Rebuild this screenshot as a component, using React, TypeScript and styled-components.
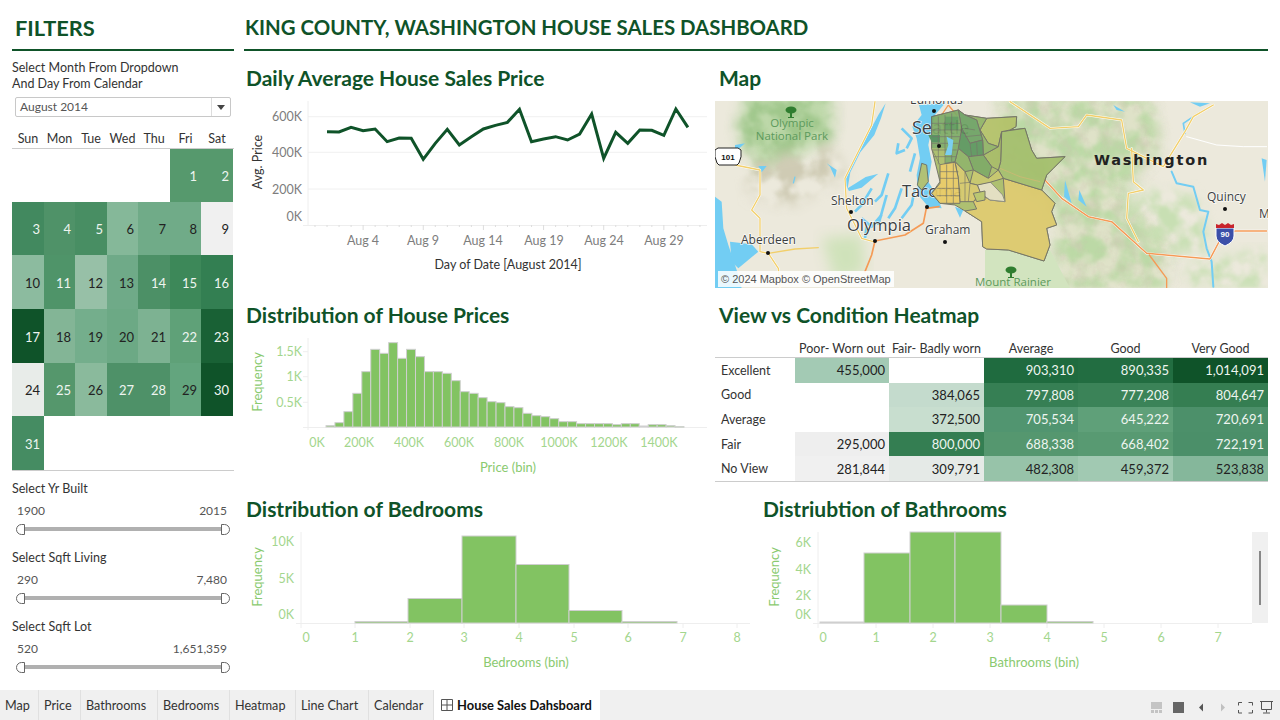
import React from 'react';
import styled, { createGlobalStyle } from 'styled-components';

const GREEN = '#0f5329';
const FONT = 'Lato, "Noto Sans", sans-serif';

const Global = createGlobalStyle`
  html, body { margin: 0; padding: 0; background: #fff; }
  body { font-family: ${FONT}; color: #333; }
`;

const Page = styled.div`
  width: 1280px; height: 720px; display: flex; flex-direction: column; overflow: hidden; background: #fff;
`;
const Body = styled.div`display: flex; height: 690px;`;
const Sidebar = styled.aside`
  width: 222px; margin-left: 12px; margin-right: 10px; flex: none; display: flex; flex-direction: column;
`;
const Main = styled.main`width: 1024px; flex: none; display: flex; flex-direction: column;`;
const Banner = styled.h1<{ $indent: number; $size: number }>`
  margin: 0; height: 49px; padding: 0 0 0 ${p => p.$indent}px; box-sizing: content-box;
  border-bottom: 2px solid ${GREEN}; color: ${GREEN}; font-size: ${p => p.$size}px; font-weight: 700;
  line-height: 55px; white-space: nowrap;
`;
const Hint = styled.div`margin-top: 9px; font-size: 12.5px; line-height: 16px; color: #333;`;
const Dropdown = styled.div`
  margin: 5px 3px 0; height: 20px; box-sizing: border-box; border: 1px solid #c8c8c8; border-radius: 2px;
  display: flex; align-items: center; font-size: 12px; color: #555; padding-left: 4px;
`;
const DropLabel = styled.span`flex: 1; margin-top: -1px;`;
const DropArrow = styled.span`
  width: 18px; height: 100%; border-left: 1px solid #ddd; display: flex; align-items: center; justify-content: center;
  &::after { content: ''; border-left: 4px solid transparent; border-right: 4px solid transparent; border-top: 5px solid #444; }
`;
const CALCOLS = '32px 31px 32px 31px 32px 31px 32px 1px';
const WeekHeader = styled.div`
  margin-top: 13px; height: 18px; display: grid; grid-template-columns: ${CALCOLS};
  border-bottom: 1px solid #ccc; font-size: 12.5px; line-height: 18px; text-align: center; color: #333;
`;
const CalGrid = styled.div`
  display: grid; grid-template-columns: ${CALCOLS}; grid-template-rows: 53px 53px 54px 54px 53px 54px;
  border-bottom: 1px solid #ccc;
`;
const DayCell = styled.div<{ $bg: string; $dark: boolean; $start?: number }>`
  background: ${p => p.$bg}; color: ${p => (p.$dark ? '#222' : '#eef5f0')};
  grid-column-start: ${p => p.$start ?? 'auto'};
  display: flex; align-items: center; justify-content: flex-end; padding-right: 4px;
  font-size: 13px; padding-top: 1px; box-sizing: border-box;
`;
const Filter = styled.div<{ $top: number }>`margin-top: ${p => p.$top}px;`;
const FilterTitle = styled.div`font-size: 12.5px; line-height: 16px; color: #333;`;
const RangeValues = styled.div`
  margin-top: 6px; padding: 0 7px 0 5px; display: flex; justify-content: space-between;
  font-size: 12px; line-height: 16px; color: #555;
`;
const Track = styled.div`margin: 4px 4px 0 4px; display: flex; align-items: center; height: 12px;`;
const Rail = styled.div`flex: 1; height: 4px; background: #b0b0b0;`;
const Handle = styled.div<{ $side: 'left' | 'right' }>`
  width: 9px; height: 11px; box-sizing: border-box; border: 1px solid #666; background: #fff;
  border-radius: ${p => (p.$side === 'left' ? '6px 0 0 6px' : '0 6px 6px 0')};
`;
const Row = styled.section<{ $cols: string; $h: number; $top: number }>`
  display: grid; grid-template-columns: ${p => p.$cols}; height: ${p => p.$h}px; margin-top: ${p => p.$top}px;
`;
const Panel = styled.div`position: relative; display: flex; flex-direction: column; min-width: 0;`;
const Title = styled.h2<{ $indent: number; $gap: number }>`
  margin: 0 0 ${p => p.$gap}px; padding-left: ${p => p.$indent}px; height: 30px; line-height: 30px;
  color: ${GREEN}; font-size: 21px; font-weight: 700; white-space: nowrap;
`;
const Svg = styled.svg`display: block; overflow: hidden;`;
const Tick = styled.text<{ $light?: boolean }>`
  font-family: ${FONT}; font-size: 12.5px; fill: ${p => (p.$light ? '#a3d68d' : '#7d7d7d')};
`;
const AxisName = styled.text<{ $light?: boolean; $size?: number }>`
  font-family: ${FONT}; font-size: ${p => p.$size ?? 12.5}px; fill: ${p => (p.$light ? '#8aca70' : '#333')};
`;
const HEATCOLS = '80px 94px 95px 94px 95px 95px';
const HeatHeadRow = styled.div`
  display: grid; grid-template-columns: ${HEATCOLS}; width: 553px; height: 19px; border-bottom: 1px solid #ccc;
`;
const HeatHead = styled.div`
  height: 20px; display: flex; align-items: center; justify-content: center; color: #333; white-space: nowrap; font-size: 12.5px;
`;
const HeatGrid = styled.div`
  display: grid; grid-template-columns: ${HEATCOLS}; grid-auto-rows: 24.6px;
  width: 553px; font-size: 12.5px; border-bottom: 1px solid #ccc;
`;
const HeatLabel = styled.div`display: flex; align-items: center; padding-left: 6px; color: #333;`;
const HeatCell = styled.div<{ $bg: string; $dark: boolean }>`
  background: ${p => p.$bg}; color: ${p => (p.$dark ? '#222' : '#eef5f0')};
  display: flex; align-items: center; justify-content: flex-end; padding-right: 4px; font-size: 13px;
`;
const Scroll = styled.div`
  position: absolute; right: 0; top: 38px; width: 16px; height: 91px; background: #f0f0f0;
  display: flex; justify-content: center; align-items: center;
`;
const Thumb = styled.div`width: 2px; height: 54px; background: #888;`;
const TabBar = styled.nav`
  height: 30px; background: #f0f0f0; display: flex; align-items: stretch; font-size: 12.6px; color: #333;
`;
const Tab = styled.div<{ $w: number }>`
  width: ${p => p.$w}px; flex: none; box-sizing: border-box; padding-left: 5px; border-right: 1px solid #e0e0e0;
  display: flex; align-items: center; white-space: nowrap;
`;
const ActiveTab = styled.div`
  width: 166px; box-sizing: border-box; background: #fff; flex: none; display: flex; align-items: center;
  gap: 4px; padding-left: 7px; font-size: 12.9px; font-weight: 700; color: #111; white-space: nowrap;
`;
const TabTools = styled.div`margin-left: auto; display: flex; align-items: center; padding-right: 5px;`;

const days: [string, boolean][] = [
  ['#56996d', false], ['#56996d', false], ['#42895f', false], ['#4f9268', false], ['#488e63', false], ['#85b899', true], ['#70ab88', true],
  ['#70ab88', true], ['#f0f0f0', true], ['#8cbb9f', true], ['#4f9469', false], ['#97c0a7', true], ['#6faa88', true], ['#4c9066', false],
  ['#3d8859', false], ['#337f52', false], ['#0f5329', false], ['#83b596', true], ['#74ae8c', true], ['#6ca985', true], ['#7db292', true],
  ['#5fa178', false], ['#196135', false], ['#e8ece9', true], ['#55976c', false], ['#8aba9c', true], ['#4e9168', false], ['#4e9168', false],
  ['#63a57e', true], ['#0f5329', false], ['#458c62', false],
];

const sliders = [
  { t: 'Select Yr Built', a: '1900', b: '2015', top: 10 },
  { t: 'Select Sqft Living', a: '290', b: '7,480', top: 15 },
  { t: 'Select Sqft Lot', a: '520', b: '1,651,359', top: 15 },
];

const lineZ = [125, 126, 112, 122, 117, 155, 144, 145, 208, 160, 118, 165, 140, 117, 106, 97, 58, 155, 147, 140, 150, 132, 72, 205, 127, 160, 120, 121, 136, 57, 112];
const dayX = (d: number) => 327 + 12.03 * (d - 1);

const LineChart = () => (
  <Svg width={471} height={187} viewBox="244 101 471 187">
    {[116.7, 152.3, 189].map(y => <line key={y} x1={308} x2={707} y1={y} y2={y} stroke="#f0f0f0" />)}
    <line x1={308} x2={308} y1={101} y2={225} stroke="#eee" />
    <line x1={303} x2={707} y1={225.5} y2={225.5} stroke="#eee" />
    {Array.from({ length: 33 }, (_, i) => i).map(i => <line key={i} x1={315 + i * 12.03} x2={315 + i * 12.03} y1={225} y2={i % 5 === 4 ? 230 : 227} stroke="#ddd" />)}
    <polyline points={lineZ.map((z, i) => `${dayX(i + 1)},${90 + z / 3}`).join(' ')} fill="none" stroke={GREEN} strokeWidth={3} strokeLinejoin="miter" />
    {[['600K', 121], ['400K', 157], ['200K', 194], ['0K', 221]].map(([t, y]) => <Tick key={t} x={302} y={y} textAnchor="end">{t}</Tick>)}
    {[['Aug 4', 363], ['Aug 9', 423], ['Aug 14', 483], ['Aug 19', 544], ['Aug 24', 604], ['Aug 29', 664]].map(([t, x]) => <Tick key={t} x={x} y={245} textAnchor="middle">{t}</Tick>)}
    <AxisName x={508} y={269} textAnchor="middle">Day of Date [August 2014]</AxisName>
    <AxisName transform="translate(262 162) rotate(-90)" textAnchor="middle">Avg. Price</AxisName>
  </Svg>
);

const histTops = [287, 278, 245, 190, 125, 58, 70, 38, 85, 58, 80, 125, 125, 130, 152, 185, 190, 203, 215, 218, 230, 233, 250, 257, 260, 266, 275, 275, 281, 281, 281, 281, 284, 281, 281, 288, 284, 284, 287, 290];

const PriceHist = () => (
  <Svg width={471} height={146} viewBox="244 336 471 146">
    <line x1={308} x2={308} y1={338} y2={430} stroke="#eee" />
    <line x1={303} x2={707} y1={427.5} y2={427.5} stroke="#eee" />
    {[351.7, 376.7, 402.3].map(y => <line key={y} x1={303} x2={308} y1={y} y2={y} stroke="#eee" />)}
    {histTops.map((z, i) => {
      const x = 326 + i * 8.95;
      const y = 330 + z / 3;
      return <rect key={i} x={x} y={y} width={8.95} height={Math.max(427 - y, 0.5)} fill="#82c362" stroke="#cfcfcf" strokeWidth={1} />;
    })}
    {[['1.5K', 356], ['1K', 381], ['0.5K', 407]].map(([t, y]) => <Tick $light key={t} x={302} y={y} textAnchor="end">{t}</Tick>)}
    {[['0K', 317], ['200K', 359], ['400K', 409], ['600K', 459], ['800K', 509], ['1000K', 559], ['1200K', 609], ['1400K', 659]].map(([t, x]) => <Tick $light key={t} x={x} y={447} textAnchor="middle">{t}</Tick>)}
    <AxisName $light $size={13} x={508} y={472} textAnchor="middle">Price (bin)</AxisName>
    <AxisName $light $size={13} transform="translate(262 382) rotate(-90)" textAnchor="middle">Frequency</AxisName>
  </Svg>
);

type BinProps = {
  x0: number; w: number; axisEnd: number; bars: [number, number, number][]; yTicks: [string, number][];
  xTicks: [string, number, number][]; name: string; nameX: number; freqX: number;
};
const BinChart = ({ x0, w, axisEnd, bars, yTicks, xTicks, name, nameX, freqX }: BinProps) => (
  <Svg width={w} height={160} viewBox={`${x0} 530 ${w} 160`}>
    <line x1={xTicks[0][1]} x2={xTicks[0][1]} y1={532} y2={623} stroke="#eee" />
    <line x1={xTicks[0][1] - 5} x2={axisEnd} y1={623.5} y2={623.5} stroke="#eee" />
    {xTicks.map(([t, x]) => <line key={t} x1={x} x2={x} y1={623} y2={628} stroke="#eee" />)}
    {bars.map(([a, b, top]) => <rect key={a} x={a} y={top} width={b - a} height={623 - top} fill="#82c362" stroke="#cfcfcf" strokeWidth={1} />)}
    {yTicks.map(([t, y]) => <Tick $light key={t} x={xTicks[0][1] - 7} y={y + 4} textAnchor="end">{t}</Tick>)}
    {xTicks.map(([t, , lx]) => <Tick $light key={t} x={lx} y={642} textAnchor="middle">{t}</Tick>)}
    <AxisName $light $size={13} x={nameX} y={667} textAnchor="middle">{name}</AxisName>
    <AxisName $light $size={13} transform={`translate(${freqX} 577) rotate(-90)`} textAnchor="middle">Frequency</AxisName>
  </Svg>
);

const MapCity = styled.text<{ $size: number }>`
  font-family: "Open Sans", "Noto Sans", sans-serif; font-size: ${p => p.$size}px; fill: #3c3f41;
  paint-order: stroke; stroke: rgba(255,255,255,.75); stroke-width: 1.5px;
`;
const MapPark = styled.text`font-family: "Open Sans", sans-serif; font-size: 11.5px; fill: #5c9a5c;`;
const MapState = styled.text`font-family: "DejaVu Sans", sans-serif; font-size: 14.5px; font-weight: 700; fill: #222; letter-spacing: 1.8px;`;
const Attribution = styled.text`font-family: "Liberation Sans", sans-serif; font-size: 11px; fill: #555;`;
const ShieldText = styled.text<{ $fill: string }>`font-family: "Liberation Sans", sans-serif; font-weight: 700; font-size: 8px; fill: ${p => p.$fill};`;

const Tree = ({ x, y }: { x: number; y: number }) => (
  <g transform={`translate(${x} ${y})`} fill="#2f7d2f">
    <ellipse cx={0} cy={-2} rx={5.5} ry={3.5} />
    <rect x={-1} y={-1} width={2} height={7} />
    <rect x={-3} y={5} width={6} height={1} />
  </g>
);

const water = '#72cdf3';
const YELLOW_ROADS = [
  '60,20 180,100 265,95 290,60 395,75 410,160 520,215 585,110 610,65 670,30',
  '425,160 430,260 460,285 415,295 410,370 445,440',
];

const MapView = () => (
  <Svg width={553} height={187} viewBox="715 101 553 187">
    <defs>
      <filter id="mottle" x="0" y="0" width="100%" height="100%">
        <feTurbulence type="fractalNoise" baseFrequency="0.05" numOctaves={4} seed={7} />
        <feColorMatrix values="0 0 0 0 0  0 0 0 0 0  0 0 0 0 0  3.2 0 0 0 -1.05" result="n" />
        <feComposite in="SourceGraphic" in2="n" operator="in" />
        <feGaussianBlur stdDeviation="0.8" />
      </filter>
      <filter id="shade" x="0" y="0" width="100%" height="100%">
        <feTurbulence type="fractalNoise" baseFrequency="0.08" numOctaves={4} seed={3} />
        <feColorMatrix values="0 0 0 0 .6  0 0 0 0 .56  0 0 0 0 .44  2.2 0 0 0 -0.95" />
        <feGaussianBlur stdDeviation="0.5" />
      </filter>
      <filter id="soft" x="-20%" y="-20%" width="140%" height="140%"><feGaussianBlur stdDeviation="7" /></filter>
      <clipPath id="mapclip"><rect x={715} y={101} width={553} height={187} /></clipPath>
      <mask id="olympic" maskUnits="userSpaceOnUse" x={715} y={101} width={553} height={187}>
        <polygon points="745,95 832,95 832,138 785,162 758,168 738,130" fill="#fff" filter="url(#soft)" />
      </mask>
      <mask id="olyfoot" maskUnits="userSpaceOnUse" x={715} y={101} width={553} height={187}>
        <polygon points="750,160 830,145 845,175 790,205 750,195" fill="#fff" filter="url(#soft)" />
      </mask>
      <mask id="cascades" maskUnits="userSpaceOnUse" x={715} y={101} width={553} height={187}>
        <polygon points="1000,95 1150,95 1160,150 1120,195 1170,240 1165,290 1060,290 1050,200 1000,170" fill="#fff" filter="url(#soft)" />
      </mask>
      <mask id="east" maskUnits="userSpaceOnUse" x={715} y={101} width={553} height={187}>
        <polygon points="1130,190 1195,195 1210,250 1150,255" fill="#fff" filter="url(#soft)" />
        <polygon points="1185,265 1268,250 1268,290 1190,290" fill="#fff" filter="url(#soft)" />
      </mask>
      <mask id="south" maskUnits="userSpaceOnUse" x={715} y={101} width={553} height={187}>
        <polygon points="822,238 862,235 865,272 835,282" fill="#fff" filter="url(#soft)" />
      </mask>
    </defs>
    <g clipPath="url(#mapclip)">
      <rect x={715} y={101} width={553} height={187} fill="#ece9dc" />
      <g mask="url(#olympic)"><rect x={715} y={101} width={553} height={187} fill="#bdd8a9" /></g>
      <g mask="url(#olympic)"><rect x={715} y={101} width={553} height={187} fill="#a0c78c" filter="url(#mottle)" /></g>
      <g mask="url(#olyfoot)"><rect x={715} y={101} width={553} height={187} fill="#cfcbb4" filter="url(#mottle)" /></g>
      <g mask="url(#cascades)"><rect x={715} y={101} width={553} height={187} fill="#dfe2c8" /></g>
      <g mask="url(#cascades)"><rect x={715} y={101} width={553} height={187} fill="#bcd9a6" filter="url(#mottle)" /></g>
      <g mask="url(#cascades)"><rect x={715} y={101} width={553} height={187} filter="url(#shade)" opacity={0.5} /></g>
      <g mask="url(#east)"><rect x={715} y={101} width={553} height={187} fill="#c8dfb3" filter="url(#mottle)" /></g>
      <g mask="url(#south)"><rect x={715} y={101} width={553} height={187} fill="#cfe2ba" /></g>
      <polygon points="985,250 1050,250 1070,288 985,288" fill="#d2e4bf" />

      <g transform="translate(715 95) scale(0.3333)" fill={water}>
        <polygon points="612,30 690,25 660,60 648,110 640,150 650,200 640,260 665,300 680,340 640,335 610,300 605,240 615,190 605,130 592,95 620,60" />
        <polygon points="512,25 498,70 478,120 436,172 406,232 398,280 420,266 452,246 490,236 440,278 402,288 392,270 394,240 428,170 466,105 490,60" />
        <polygon points="0,305 20,320 25,400 40,450 70,540 80,580 0,580" />
        <polygon points="45,440 110,448 130,470 70,520 50,500" />
        <polygon points="130,213 155,213 140,232" />
        <polygon points="60,150 90,145 60,172" />
        <polygon points="335,205 365,225 360,248 345,215" />
        <polygon points="720,335 745,345 735,368" />
        <g fill="none" stroke={water} strokeWidth={8} strokeLinejoin="round">
          <polyline points="560,100 590,130 575,160" />
          <polyline points="550,145 545,175 570,165" />
          <polyline points="600,175 585,230" />
          <polyline points="520,235 500,300 480,320" />
          <polyline points="470,280 440,330 420,350" />
          <polyline points="560,280 540,340 520,370" />
          <polyline points="600,280 590,330 560,370" />
          <polyline points="515,300 490,390" />
          <polyline points="440,370 470,395 500,360" />
          <polyline points="455,395 450,430" />
          <polyline points="240,245 235,265" strokeWidth={4} />
        </g>
        <g fill="none" strokeLinejoin="round" strokeLinecap="round">
          <polyline points="480,20 470,90 390,250 395,340 440,430 475,440" stroke="#fff" strokeWidth={7} />
          <polyline points="480,20 470,90 390,250 395,340 440,430 475,440" stroke="#f2cf6a" strokeWidth={4} />
          <polyline points="60,210 135,225 135,300 110,345 135,370 135,470 160,475 190,520 195,575" stroke="#fff" strokeWidth={7} />
          <polyline points="60,210 135,225 135,300 110,345 135,370 135,470 160,475 190,520 195,575" stroke="#f2cf6a" strokeWidth={4} />
          <polyline points="160,475 240,462 310,458" stroke="#f2cf6a" strokeWidth={4} />
          <polyline points="635,335 625,385 570,420 480,438 470,480 450,530" stroke="#f59a55" strokeWidth={5} />
          <polyline points="635,340 672,335" stroke="#f59a55" strokeWidth={5} />
          <polyline points="680,60 700,30 725,60" stroke="#f59a55" strokeWidth={4} />
        </g>
      </g>

      <g transform="translate(990 95) scale(0.3333)">
        <g fill={water}>
          <polygon points="225,255 245,325 222,305" />
          <polygon points="268,285 290,335 265,315" />
          <polygon points="370,30 405,50 380,45" />
          <polygon points="600,22 660,25 630,35" />
          <polygon points="815,190 830,195 825,260" />
        </g>
        <g fill="none" strokeLinejoin="round" strokeLinecap="round">
          <polyline points="545,230 560,265 610,275 630,345 655,350 640,410 650,460 665,500 670,575" stroke={water} strokeWidth={6} />
          <polyline points="610,65 580,85 585,115" stroke={water} strokeWidth={5} />
          {YELLOW_ROADS.map(r => <polyline key={r} points={r} stroke="#fff" strokeWidth={7} />)}
          {YELLOW_ROADS.map(r => <polyline key={r} points={r} stroke="#f2cf6a" strokeWidth={4} />)}
          <polyline points="160,250 215,310 295,365 365,380 470,475 660,492 690,435 735,408 830,408" stroke="#fff" strokeWidth={7} />
          <polyline points="160,250 215,310 295,365 365,380 470,475 660,492 690,435 735,408 830,408" stroke="#f59a55" strokeWidth={4.5} />
          <polyline points="478,480 530,550 530,580" stroke="#f59a55" strokeWidth={4} />
          <polyline points="590,125 680,150 760,155 830,155" stroke="#fff" strokeWidth={3} />
        </g>
      </g>

      <Tree x={791} y={112} />
      <MapPark x={792} y={127} textAnchor="middle">Olympic</MapPark>
      <MapPark x={792} y={140} textAnchor="middle">National Park</MapPark>
      <MapCity $size={12} x={741} y={244}>Aberdeen</MapCity>
      <MapCity $size={12} x={831} y={205}>Shelton</MapCity>
      <MapCity $size={16.5} x={847} y={231}>Olympia</MapCity>
      <MapCity $size={12} x={925} y={234}>Graham</MapCity>
      <MapCity $size={12} x={1207} y={201}>Quincy</MapCity>
      <MapCity $size={12} x={1259} y={218}>M</MapCity>
      <MapCity $size={12} x={910} y={104}>Edmonds</MapCity>
      <MapCity $size={18} x={912} y={134}>Seattle</MapCity>
      <MapCity $size={16.5} x={902} y={197}>Tacoma</MapCity>
      <MapState x={1094} y={165}>Washington</MapState>

      <g transform="translate(890 105) scale(0.3333)" stroke="#6d6d60" strokeWidth={3} strokeLinejoin="round" opacity={0.92}>
        <polygon fill="#a9bd68" points="125,35 205,15 225,30 290,40 380,35 378,65 360,75 405,70 425,135 440,160 525,155 490,190 470,210 455,255 495,295 485,320 500,360 470,370 480,420 462,468 355,435 290,432 278,425 275,350 225,318 195,300 150,295 125,265 150,230 125,130" />
        <polygon fill="#dcc96a" points="225,318 260,312 250,290 275,270 300,285 345,290 340,220 455,255 495,295 485,320 500,360 470,370 480,420 462,468 355,435 290,432 278,425 275,350" />
        <polygon fill="#e3dfc0" stroke="#8a8a7a" points="262,240 300,230 338,270 345,290 300,285 272,265" />
        <polygon fill="#a4bf6c" points="335,80 405,70 425,135 440,160 525,155 490,190 470,210 455,255 340,220 325,195 332,170" />
        <polygon fill="#b3c268" points="290,40 380,35 378,65 360,75 335,80 325,125 295,115 270,75" />
        <polygon fill="#a5ba63" points="325,125 335,80 332,170 325,195 305,185 280,150" />
        <polygon fill="#8fb365" points="225,30 290,40 270,75 295,115 325,125 280,150 278,105 260,45" />
        <polygon fill="#6ca263" points="205,15 225,30 260,45 278,105 240,115 215,70" />
        <polygon fill="#5a965c" points="215,70 240,115 278,105 280,150 235,155 205,130" />
        <polygon fill="#7aa75f" points="235,155 280,150 305,185 295,220 250,195" />
        <polygon fill="#8cb163" points="205,130 235,155 250,195 225,200 195,170" />
        <polygon fill="#c6c668" points="250,195 295,220 325,195 340,220 300,232 262,240 240,235" />
        <polygon fill="#d5c868" points="195,170 225,200 240,235 262,240 272,265 250,290 210,290 205,220" />
        <polygon fill="#e7ca62" points="150,178 195,172 205,220 210,295 150,295 125,265 150,235" />
        <polygon fill="#b7c569" points="250,265 285,258 285,285 260,290" />
        <polygon fill="#7dab66" points="125,35 205,15 215,70 205,130 195,170 150,178 125,130" />
        <polygon fill="#4e8e5a" stroke="none" points="115,90 150,90 150,112 125,112" />
        <polygon fill="#5e9a5c" stroke="none" points="165,35 205,35 205,75 165,75" />
        <polygon fill="#a9bd68" stroke="none" points="125,130 165,130 165,175 150,178" />
        <polygon fill="#b7c06c" points="95,175 110,180 115,230 95,255 82,240" />
        <g fill="none" strokeWidth={2}>
          <path d="M145,35V178M165,30V178M185,25V170M125,55H210M125,75H215M125,95H210M125,115H205M125,135H200M130,155H198" />
          <path d="M170,178V295M190,175V295M150,200H205M150,220H205M140,250H210M140,272H210" />
          <path d="M225,70L255,75M225,95L275,90M240,115L245,155M260,112L262,152M210,235L240,232M225,200V290M240,235L235,290" />
        </g>
        <polygon fill={water} stroke="none" points="170,95 190,105 185,150 165,150 175,120" />
        <polyline fill="none" stroke="#e8b070" strokeWidth={1.5} points="330,190 390,215 450,230" />
      </g>

      <MapPark x={975} y={286}>Mount Rainier</MapPark>
      <Tree x={1011} y={272} />

      {[[934, 111], [939, 146], [927, 207], [851, 212], [875, 241], [768, 253], [945, 242], [1225, 209]].map(([x, y]) => (
        <circle key={x} cx={x} cy={y} r={2} fill="#111" />
      ))}

      <g transform="translate(728 157)">
        <path d="M-13,-7 L-10,-9 H10 L13,-7 Q14,0 11,6 Q9,9 7,8 H-7 Q-9,9 -11,6 Q-14,0 -13,-7 Z" fill="#fff" stroke="#222" strokeWidth={1} />
        <ShieldText $fill="#111" x={0} y={3} textAnchor="middle">101</ShieldText>
      </g>
      <g transform="translate(1225 233)">
        <path d="M-9,-5 H9 V3 Q9,9 0,13 Q-9,9 -9,3 Z" fill="#3b4fa8" stroke="#fff" strokeWidth={1} />
        <path d="M-9,-5 L-9,-9 L-6,-8 L-3,-10 L0,-8 L3,-10 L6,-8 L9,-9 L9,-5 Z" fill="#c8242c" />
        <ShieldText $fill="#fff" x={0} y={4} textAnchor="middle">90</ShieldText>
      </g>

      <rect x={718} y={271} width={176} height={16} fill="#fff" opacity={0.85} />
      <Attribution x={721} y={283}>© 2024 Mapbox © OpenStreetMap</Attribution>
    </g>
  </Svg>
);

const heatCols = ['Poor- Worn out', 'Fair- Badly worn', 'Average', 'Good', 'Very Good'];
const heat: [string, ([string, string, boolean] | null)[]][] = [
  ['Excellent', [['455,000', '#a3cab4', true], null, ['903,310', '#1f6b3f', false], ['890,335', '#226d41', false], ['1,014,091', '#0f5329', false]]],
  ['Good', [null, ['384,065', '#c4dbcd', true], ['797,808', '#367f54', false], ['777,208', '#3b8358', false], ['804,647', '#357e52', false]]],
  ['Average', [null, ['372,500', '#c8decf', true], ['705,534', '#519570', false], ['645,222', '#5fa079', false], ['720,691', '#4c906a', false]]],
  ['Fair', [['295,000', '#eeeeee', true], ['800,000', '#347e52', false], ['688,338', '#55976f', false], ['668,402', '#589a72', false], ['722,191', '#4b8f69', false]]],
  ['No View', [['281,844', '#f0f0f0', true], ['309,791', '#e5eae7', true], ['482,308', '#97c3a9', true], ['459,372', '#a1c9b2', true], ['523,838', '#85b79b', true]]],
];

const tabs: [string, number][] = [['Map', 39], ['Price', 42], ['Bathrooms', 77], ['Bedrooms', 72], ['Heatmap', 66], ['Line Chart', 73], ['Calendar', 65]];

const ToolIcons = () => (
  <svg width={124} height={30} viewBox="1151 690 124 30" fill="none">
    <rect x={1151} y={702} width={11} height={7} fill="#c4c4c4" />
    <rect x={1151} y={710} width={3} height={3} fill="#c4c4c4" />
    <rect x={1155} y={710} width={3} height={3} fill="#c4c4c4" />
    <rect x={1159} y={710} width={3} height={3} fill="#c4c4c4" />
    <rect x={1173} y={702} width={11} height={11} fill="#666" />
    <path d="M1203,703.5V711.5L1199,707.5Z" fill="#555" />
    <path d="M1221,703.5V711.5L1225,707.5Z" fill="#c0c0c0" />
    <path d="M1238.5,705.5V702.5H1242M1248.5,702.5H1252.5V705.5M1252.5,710V713H1248.5M1242,713H1238.5V710" stroke="#555" />
    <path d="M1260,701.5H1273M1261.5,702V709.5H1271.5V702M1266.5,710V712.5M1263,713H1270" stroke="#555" />
  </svg>
);

export default function App() {
  return (
    <Page>
      <Global />
      <Body>
        <Sidebar>
          <Banner $indent={3} $size={21.8}>FILTERS</Banner>
          <Hint>Select Month From Dropdown<br />And Day From Calendar</Hint>
          <Dropdown><DropLabel>August 2014</DropLabel><DropArrow /></Dropdown>
          <WeekHeader>
            {['Sun', 'Mon', 'Tue', 'Wed', 'Thu', 'Fri', 'Sat'].map(d => <span key={d}>{d}</span>)}
          </WeekHeader>
          <CalGrid>
            {days.map(([bg, dark], i) => (
              <DayCell key={i} $bg={bg} $dark={dark} $start={i === 0 ? 6 : (i + 5) % 7 === 0 ? 1 : undefined}>{i + 1}</DayCell>
            ))}
          </CalGrid>
          {sliders.map(s => (
            <Filter key={s.t} $top={s.top}>
              <FilterTitle>{s.t}</FilterTitle>
              <RangeValues><span>{s.a}</span><span>{s.b}</span></RangeValues>
              <Track><Handle $side="left" /><Rail /><Handle $side="right" /></Track>
            </Filter>
          ))}
        </Sidebar>
        <Main>
          <Banner $indent={1} $size={20.4}>KING COUNTY, WASHINGTON HOUSE SALES DASHBOARD</Banner>
          <Row $cols="471px 553px" $h={225} $top={12}>
            <Panel>
              <Title $indent={2} $gap={8}>Daily Average House Sales Price</Title>
              <LineChart />
            </Panel>
            <Panel>
              <Title $indent={4} $gap={8}>Map</Title>
              <MapView />
            </Panel>
          </Row>
          <Row $cols="471px 553px" $h={182} $top={12}>
            <Panel>
              <Title $indent={2} $gap={6}>Distribution of House Prices</Title>
              <PriceHist />
            </Panel>
            <Panel>
              <Title $indent={4} $gap={8}>View vs Condition Heatmap</Title>
              <HeatHeadRow>
                <span />
                {heatCols.map(c => <HeatHead key={c}>{c}</HeatHead>)}
              </HeatHeadRow>
              <HeatGrid>
                {heat.map(([label, cells]) => (
                  <React.Fragment key={label}>
                    <HeatLabel>{label}</HeatLabel>
                    {cells.map((c, i) => (c
                      ? <HeatCell key={i} $bg={c[1]} $dark={c[2]}>{c[0]}</HeatCell>
                      : <span key={i} />))}
                  </React.Fragment>
                ))}
              </HeatGrid>
            </Panel>
          </Row>
          <Row $cols="516px 508px" $h={196} $top={12}>
            <Panel>
              <Title $indent={2} $gap={6}>Distribution of Bedrooms</Title>
              <BinChart
                x0={244} w={516} axisEnd={750} freqX={262} nameX={526} name="Bedrooms (bin)"
                bars={[[355, 408, 621.5], [408, 462, 598.5], [462, 516, 536], [516, 569, 564.5], [569, 622, 610.5], [622, 677, 621.5]]}
                yTicks={[['10K', 542], ['5K', 579], ['0K', 615]]}
                xTicks={[['0', 301, 306], ['1', 355, 355], ['2', 410, 410], ['3', 464, 464], ['4', 519, 519], ['5', 574, 574], ['6', 628, 628], ['7', 683, 683], ['8', 737, 737]]}
              />
            </Panel>
            <Panel>
              <Title $indent={3} $gap={6}>Distriubtion of Bathrooms</Title>
              <BinChart
                x0={760} w={508} axisEnd={1252} freqX={779} nameX={1034} name="Bathrooms (bin)"
                bars={[[820, 864, 622], [864, 910, 553], [910, 955, 532], [955, 1001, 532], [1001, 1047, 605], [1047, 1093, 621.5]]}
                yTicks={[['6K', 543], ['4K', 570], ['2K', 596], ['0K', 615]]}
                xTicks={[['0', 818, 823], ['1', 876, 876], ['2', 933, 933], ['3', 990, 990], ['4', 1047, 1047], ['5', 1104, 1104], ['6', 1161, 1161], ['7', 1218, 1218]]}
              />
              <Scroll><Thumb /></Scroll>
            </Panel>
          </Row>
        </Main>
      </Body>
      <TabBar>
        {tabs.map(([t, w]) => <Tab key={t} $w={w}>{t}</Tab>)}
        <ActiveTab>
          <svg width={12} height={12} viewBox="0 0 12 12" fill="none" stroke="#555"><path d="M.5.5h11v11H.5zM6 .5v11M.5 6h11" /></svg>
          House Sales Dahsboard
        </ActiveTab>
        <TabTools><ToolIcons /></TabTools>
      </TabBar>
    </Page>
  );
}
